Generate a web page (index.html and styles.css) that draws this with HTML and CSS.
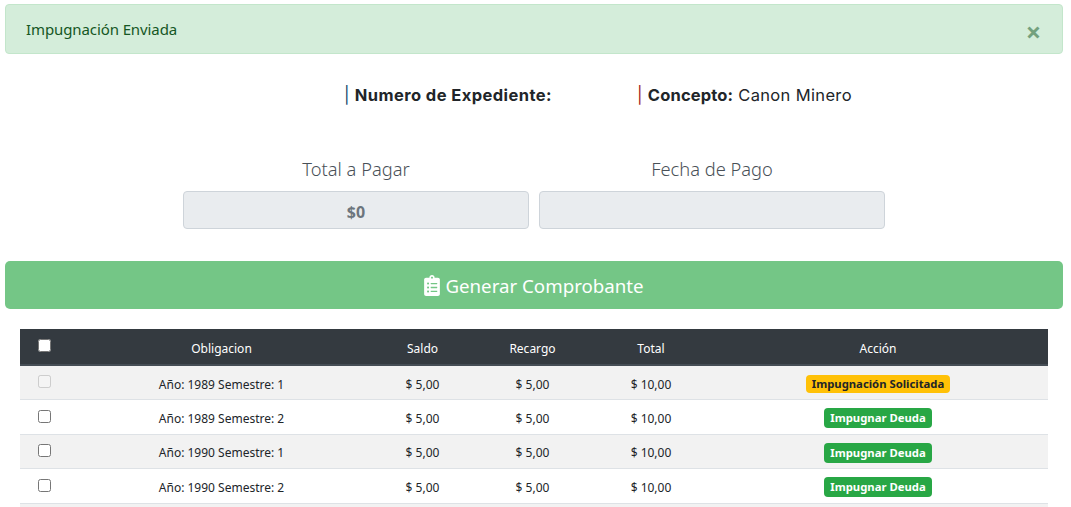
FILE: index.html
```html
<!DOCTYPE html>
<html lang="es">
<head>
<meta charset="utf-8">
<title>Impugnación</title>
<link rel="stylesheet" href="styles.css">
</head>
<body>
<div class="alert"><span>Impugnación Enviada</span><span class="close">×</span></div>
<div class="info">
  <div class="info-item info-exp"><span class="pipe pipe-blue">|</span> <b>Numero de Expediente:</b></div>
  <div class="info-item info-con"><span class="pipe pipe-red">|</span> <b>Concepto:</b> Canon Minero</div>
</div>
<div class="fields">
  <div class="field"><div class="field-label">Total a Pagar</div><div class="field-box">$0</div></div>
  <div class="field"><div class="field-label">Fecha de Pago</div><div class="field-box"></div></div>
</div>
<div class="generate">
  <svg class="clip" viewBox="0 0 384 512"><path fill="currentColor" d="M336 64h-80c0-35.300-28.700-64-64-64s-64 28.700-64 64H48C21.500 64 0 85.500 0 112v352c0 26.500 21.500 48 48 48h288c26.500 0 48-21.500 48-48V112c0-26.500-21.500-48-48-48zM96 424c-13.300 0-24-10.700-24-24s10.700-24 24-24 24 10.700 24 24-10.700 24-24 24zm0-96c-13.300 0-24-10.700-24-24s10.700-24 24-24 24 10.700 24 24-10.700 24-24 24zm0-96c-13.300 0-24-10.700-24-24s10.700-24 24-24 24 10.700 24 24-10.700 24-24 24zm96-192c13.300 0 24 10.700 24 24s-10.700 24-24 24-24-10.700-24-24 10.700-24 24-24zm128 368c0 4.400-3.600 8-8 8H168c-4.400 0-8-3.600-8-8v-16c0-4.400 3.600-8 8-8h144c4.400 0 8 3.600 8 8v16zm0-96c0 4.400-3.600 8-8 8H168c-4.400 0-8-3.600-8-8v-16c0-4.400 3.600-8 8-8h144c4.400 0 8 3.600 8 8v16zm0-96c0 4.400-3.600 8-8 8H168c-4.400 0-8-3.600-8-8v-16c0-4.400 3.600-8 8-8h144c4.400 0 8 3.600 8 8v16z"/></svg>
  <span>Generar Comprobante</span>
</div>
<div class="table-wrap">
<table>
  <thead>
    <tr><th class="c-check"><input type="checkbox"></th><th class="c-ob">Obligacion</th><th class="c-n1">Saldo</th><th class="c-n2">Recargo</th><th class="c-n3">Total</th><th>Acción</th></tr>
  </thead>
  <tbody>
    <tr class="odd"><td><input type="checkbox" disabled></td><td>Año: 1989 Semestre: 1</td><td>$ 5,00</td><td>$ 5,00</td><td>$ 10,00</td><td><span class="badge badge-warn">Impugnación Solicitada</span></td></tr>
    <tr><td><input type="checkbox"></td><td>Año: 1989 Semestre: 2</td><td>$ 5,00</td><td>$ 5,00</td><td>$ 10,00</td><td><span class="badge badge-ok">Impugnar Deuda</span></td></tr>
    <tr class="odd"><td><input type="checkbox"></td><td>Año: 1990 Semestre: 1</td><td>$ 5,00</td><td>$ 5,00</td><td>$ 10,00</td><td><span class="badge badge-ok">Impugnar Deuda</span></td></tr>
    <tr><td><input type="checkbox"></td><td>Año: 1990 Semestre: 2</td><td>$ 5,00</td><td>$ 5,00</td><td>$ 10,00</td><td><span class="badge badge-ok">Impugnar Deuda</span></td></tr>
    <tr class="odd"><td class="stub" colspan="6"></td></tr>
  </tbody>
</table>
</div>
</body>
</html>
```
FILE: styles.css
```css
* { box-sizing: border-box; }
html, body { height: 507px; overflow: hidden; }
body {
  margin: 0;
  padding: 4px 8px 0 5px;
  background: #fff;
  color: #212529;
  font-family: "Noto Sans", "Open Sans", sans-serif;
  font-size: 14px;
}
.alert {
  display: flex;
  justify-content: space-between;
  align-items: center;
  height: 50px;
  padding: 0 21px 0 20px;
  background: #d4edda;
  border: 1px solid #c3e6cb;
  border-radius: 4px;
  color: #155724;
  font-size: 15px;
  letter-spacing: -0.1px;
}
.close { font-size: 27px; font-weight: 700; color: #155724; opacity: .5; line-height: 1; margin-top: 5px; }
.info {
  display: flex;
  height: 83px;
  padding: 29px 0 0 339px;
  font-family: "Inter", sans-serif;
  font-size: 16.5px;
  letter-spacing: .35px;
  line-height: 24px;
}
.info-exp { width: 293px; }
.info b { font-weight: 700; }
.info-exp b { letter-spacing: .42px; }
.info-con b { letter-spacing: .15px; }
.pipe { font-weight: 400; }
.pipe-blue { color: #174a6e; }
.pipe-red { color: #a02020; }
.fields { display: flex; gap: 10px; padding-left: 178px; }
.field { width: 346px; }
.field-label {
  height: 54px;
  padding-top: 17px;
  text-align: center;
  font-size: 18.300px;
  font-weight: 300;
  line-height: 30px;
  color: #495057;
}
.field-box {
  height: 38px;
  background: #e9ecef;
  border: 1px solid #ced4da;
  border-radius: 4px;
  text-align: center;
  font-size: 16px;
  font-weight: 700;
  line-height: 40px;
  color: #6c757d;
}
.generate {
  display: flex;
  align-items: center;
  justify-content: center;
  gap: 5px;
  height: 48px;
  margin-top: 32px;
  padding-top: 1px;
  background: #74c686;
  border-radius: 5px;
  color: #fff;
  font-size: 18.700px;
}
.clip { width: 16px; height: 21px; margin-top: -1px; }
.table-wrap { margin: 20px 15px 0; }
table { width: 100%; border-collapse: collapse; table-layout: fixed; font-size: 12px; }
th {
  height: 36px;
  padding: 3px 0 0;
  background: #343a40;
  border-bottom: 2px solid #454d55;
  color: #fff;
  font-weight: 400;
  text-align: center;
}
td {
  height: 34.500px;
  padding: 3px 0 0;
  border-bottom: 1px solid #dee2e6;
  text-align: center;
  color: #212529;
}
.odd td { background: #f2f2f2; }
.odd td.stub { height: 10px; border: 0; background: #f2f2f2; }
.c-check { width: 49px; }
.c-ob { width: 305px; }
.c-n1 { width: 97px; }
.c-n2 { width: 123px; }
.c-n3 { width: 114px; }
input[type="checkbox"] { width: 13px; height: 13px; margin: 0 0 5px; vertical-align: middle; }
.badge {
  display: inline-block;
  padding: 1px 6px;
  border-radius: 4px;
  font-size: 11.300px;
  font-weight: 700;
  line-height: 16px;
}
.badge-warn { background: #ffc107; color: #212529; }
.badge-ok { background: #28a745; color: #fff; padding: 2px 6px; }
```
